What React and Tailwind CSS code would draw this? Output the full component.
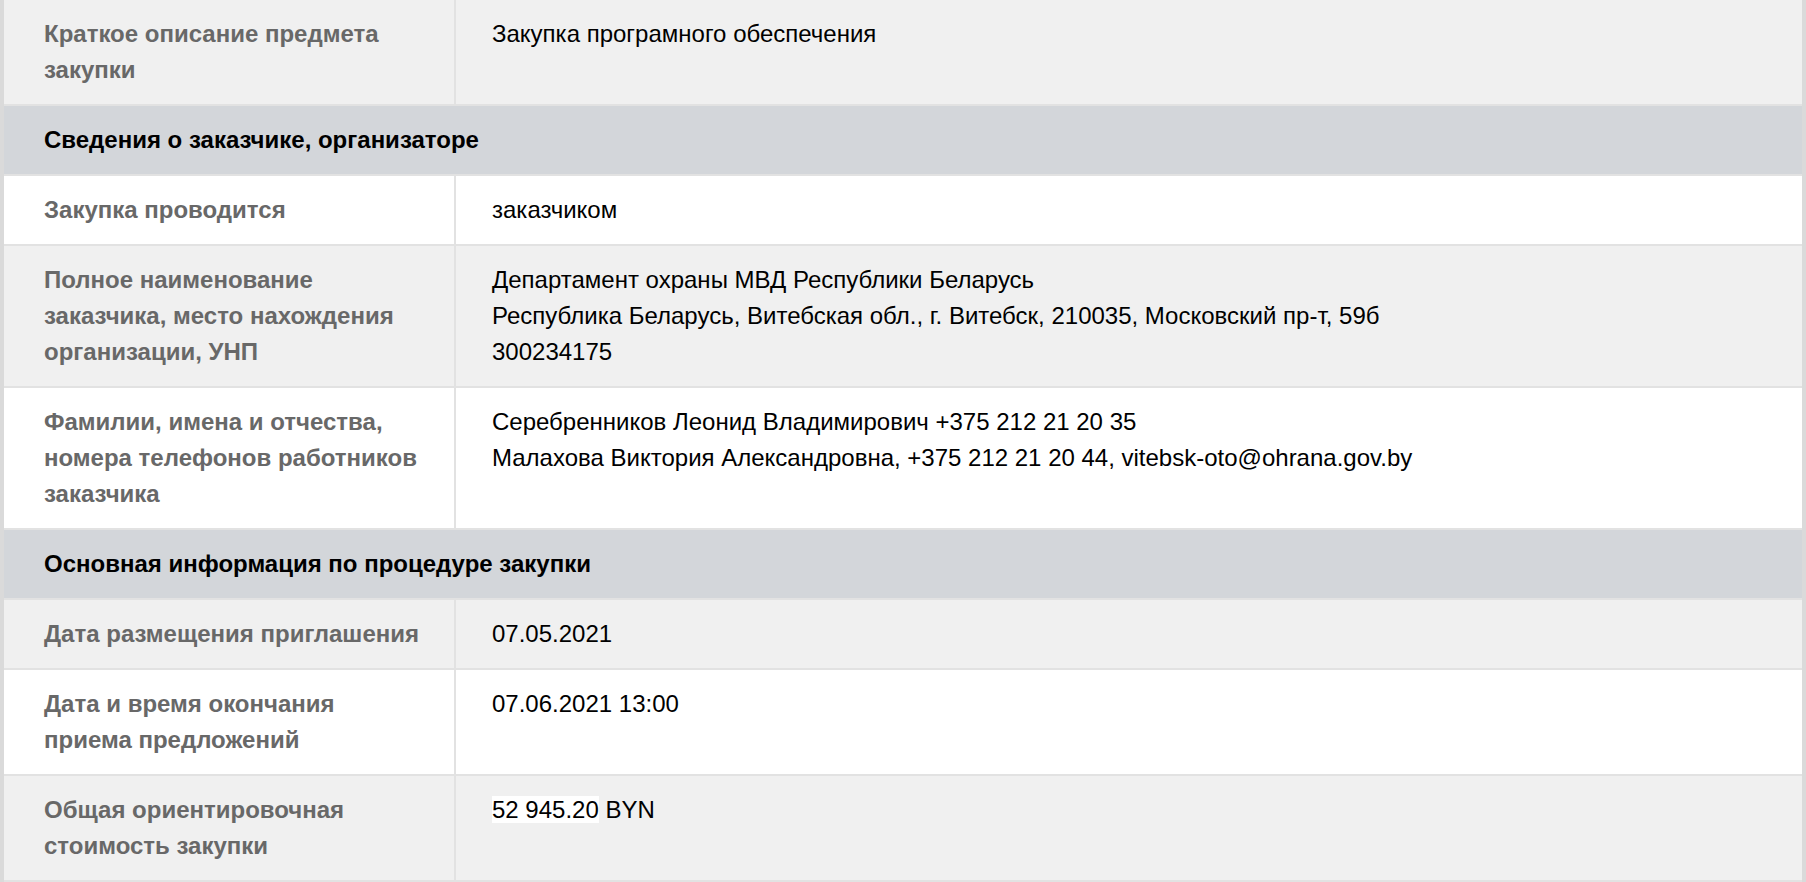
import React from 'react'

const sections = [
  {
    rows: [
      { label: 'Краткое описание предмета закупки', value: ['Закупка програмного обеспечения'], tone: 'gray' },
    ],
  },
  {
    title: 'Сведения о заказчике, организаторе',
    rows: [
      { label: 'Закупка проводится', value: ['заказчиком'], tone: 'white' },
      {
        label: 'Полное наименование заказчика, место нахождения организации, УНП',
        value: [
          'Департамент охраны МВД Республики Беларусь',
          'Республика Беларусь, Витебская обл., г. Витебск, 210035, Московский пр-т, 59б',
          '300234175',
        ],
        tone: 'gray',
      },
      {
        label: 'Фамилии, имена и отчества, номера телефонов работников заказчика',
        value: [
          'Серебренников Леонид Владимирович +375 212 21 20 35',
          'Малахова Виктория Александровна, +375 212 21 20 44, vitebsk-oto@ohrana.gov.by',
        ],
        tone: 'white',
      },
    ],
  },
  {
    title: 'Основная информация по процедуре закупки',
    rows: [
      { label: 'Дата размещения приглашения', value: ['07.05.2021'], tone: 'gray' },
      { label: 'Дата и время окончания приема предложений', value: ['07.06.2021 13:00'], tone: 'white' },
      { label: 'Общая ориентировочная стоимость закупки', value: 'price', tone: 'gray' },
    ],
  },
]

function Row({ row }) {
  const bg = row.tone === 'gray' ? 'bg-[#f0f0f0]' : 'bg-white'
  return (
    <div className={`grid grid-cols-[452px_1fr] border-b-2 border-[#e2e2e2] ${bg}`}>
      <div className="border-r-2 border-[#e2e2e2] pl-10 pr-[34px] py-4 font-bold text-[#686868]">
        {row.label}
      </div>
      <div className="pl-[36px] pr-6 py-4 text-black">
        {row.value === 'price' ? (
          <div>
            <span className="bg-white">52 945.20</span> BYN
          </div>
        ) : (
          row.value.map((line, i) => <div key={i}>{line}</div>)
        )}
      </div>
    </div>
  )
}

export default function App() {
  return (
    <div className="min-h-screen bg-white">
      <div className="border-x-4 border-[#dadada] text-[24px] leading-[36px] font-['Liberation_Sans',Arial,sans-serif]">
        {sections.map((s, i) => (
          <div key={i}>
            {s.title && (
              <div className="border-b-2 border-[#e2e2e2] bg-[#d3d6da] px-10 py-4 font-bold text-black">
                {s.title}
              </div>
            )}
            {s.rows.map((r, j) => (
              <Row key={j} row={r} />
            ))}
          </div>
        ))}
      </div>
    </div>
  )
}
